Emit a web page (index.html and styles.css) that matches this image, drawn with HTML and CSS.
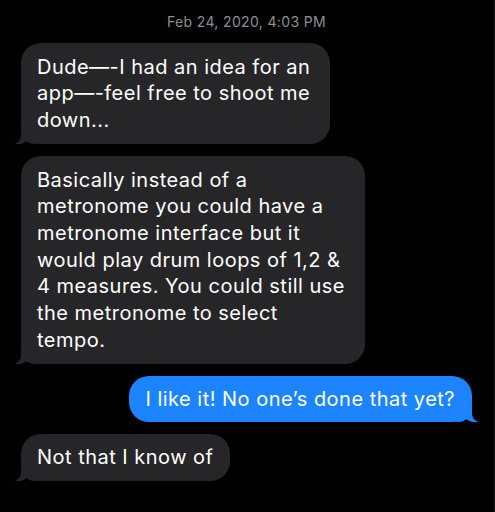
FILE: index.html
```html
<!DOCTYPE html>
<html>
<head>
<meta charset="utf-8">
<link rel="stylesheet" href="styles.css">
</head>
<body>
<div class="thread">
  <div class="stamp">Feb 24, 2020, 4:03 PM</div>
  <div class="msg in">
    <div class="bubble">Dude—-I had an idea for an<br>app—-feel free to shoot me<br>down...
      <svg class="tail" width="22" height="18" viewBox="0 0 22 18"><path d="M7,0 L7,9 C7,13.5 4.5,16.5 0.5,18 C5,18.6 9.5,17.6 12.5,15.2 C15.5,17.3 18.5,18 22,18 L22,0 Z"/></svg>
    </div>
  </div>
  <div class="msg in">
    <div class="bubble">Basically instead of a<br>metronome you could have a<br>metronome interface but it<br>would play drum loops of 1,2 &amp;<br>4 measures. You could still use<br>the metronome to select<br>tempo.
      <svg class="tail" width="22" height="18" viewBox="0 0 22 18"><path d="M7,0 L7,9 C7,13.5 4.5,16.5 0.5,18 C5,18.6 9.5,17.6 12.5,15.2 C15.5,17.3 18.5,18 22,18 L22,0 Z"/></svg>
    </div>
  </div>
  <div class="msg out">
    <div class="bubble">I like it! No one’s done that yet?
      <svg class="tail" width="22" height="18" viewBox="0 0 22 18"><path d="M7,0 L7,9 C7,13.5 4.5,16.5 0.5,18 C5,18.6 9.5,17.6 12.5,15.2 C15.5,17.3 18.5,18 22,18 L22,0 Z"/></svg>
    </div>
  </div>
  <div class="msg in">
    <div class="bubble single">Not that I know of
      <svg class="tail" width="22" height="18" viewBox="0 0 22 18"><path d="M7,0 L7,9 C7,13.5 4.5,16.5 0.5,18 C5,18.6 9.5,17.6 12.5,15.2 C15.5,17.3 18.5,18 22,18 L22,0 Z"/></svg>
    </div>
  </div>
</div>
</body>
</html>
```
FILE: styles.css
```css
html, body {
  margin: 0;
  padding: 0;
  background: #000;
  height: 100%;
}
body {
  font-family: Inter, "Liberation Sans", sans-serif;
  border-right: 1px solid #161616;
  box-sizing: border-box;
}
.thread {
  display: flex;
  flex-direction: column;
  gap: 12px;
  padding: 14px 22px 0 21px;
}
.stamp {
  text-align: center;
  color: #8e8e93;
  font-size: 14px;
  letter-spacing: 0.35px;
  line-height: 16px;
  margin-bottom: 1px;
}
.msg {
  display: flex;
}
.msg.out {
  justify-content: flex-end;
}
.bubble {
  position: relative;
  background: #262628;
  color: #fff;
  font-size: 20px;
  letter-spacing: 0.48px;
  line-height: 26.7px;
  padding: 10.5px 20px 10.5px 16px;
  border-radius: 20px;
  white-space: nowrap;
}
.bubble.single {
  padding-right: 16.5px;
}
.msg.out .bubble {
  background: #1b84fe;
  padding: 9.5px 17px 9.5px 17px;
}
.tail {
  position: absolute;
  left: -7px;
  bottom: 0;
  fill: #262628;
}
.msg.out .tail {
  left: auto;
  right: -7px;
  transform: scaleX(-1);
  fill: #1b84fe;
}
```
